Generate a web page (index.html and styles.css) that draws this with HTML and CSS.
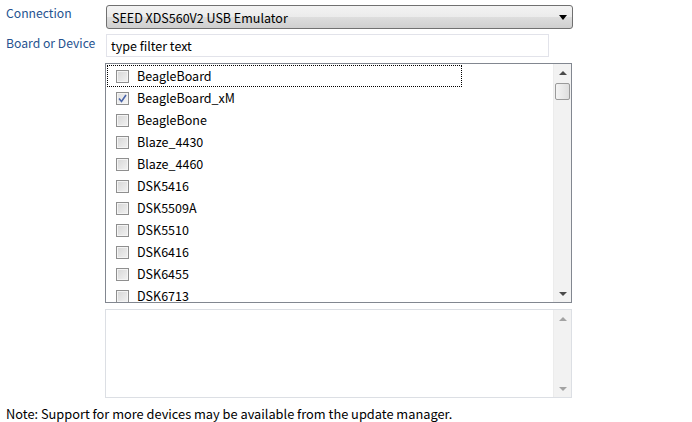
FILE: index.html
```html
<!DOCTYPE html>
<html lang="en">
<head>
    <meta charset="utf-8">
    <title>Board or Device</title>
<link rel="stylesheet" href="styles.css">
</head>
<body>
    <div id="page">
        <div class="row">
            <div class="label lblConn">Connection</div>
            <div class="combo">
                <span>SEED XDS560V2 USB Emulator</span>
                <span class="arrow"></span>
            </div>
        </div>
        <div class="row">
            <div class="label lblBoard">Board or Device</div>
            <div class="filter">type filter text</div>
        </div>
        <div class="row">
            <div class="label"></div>
            <div class="list">
                <div class="items">
                    <div class="item focus"><span class="chk"></span>BeagleBoard</div>
                    <div class="item"><span class="chk on"><svg width="9" height="9" viewBox="0 0 9 9"><path d="M1 4.5 L3.5 7.5 L8 1" fill="none" stroke="#4a64a8" stroke-width="1.6"/></svg></span>BeagleBoard_xM</div>
                    <div class="item"><span class="chk"></span>BeagleBone</div>
                    <div class="item"><span class="chk"></span>Blaze_4430</div>
                    <div class="item"><span class="chk"></span>Blaze_4460</div>
                    <div class="item"><span class="chk"></span>DSK5416</div>
                    <div class="item"><span class="chk"></span>DSK5509A</div>
                    <div class="item"><span class="chk"></span>DSK5510</div>
                    <div class="item"><span class="chk"></span>DSK6416</div>
                    <div class="item"><span class="chk"></span>DSK6455</div>
                    <div class="item"><span class="chk"></span>DSK6713</div>
                </div>
                <div class="sbar">
                    <span class="up"></span>
                    <span class="thumb"></span>
                    <span class="grow"></span>
                    <span class="down"></span>
                </div>
            </div>
        </div>
        <div class="row">
            <div class="label"></div>
            <div class="desc">
                <div class="items"></div>
                <div class="sbar off">
                    <span class="up"></span>
                    <span class="grow"></span>
                    <span class="down"></span>
                </div>
            </div>
        </div>
        <div class="note">Note: Support for more devices may be available from the update manager.</div>
    </div>
</body>
</html>
```
FILE: styles.css
```css
body{
    margin: 0;
    background: #fff;
    font-family: "Noto Sans CJK SC", "Noto Sans", sans-serif;
    font-size: 12.5px;
    color: #000;
}
#page{
    padding: 5px 0 0 6px;
}
.row{
    display: flex;
    margin-bottom: 6px;
}
.label{
    width: 99px;
    flex: none;
    color: #26528f;
}
.lblConn{ margin-top: -1px; font-size: 12.2px; }
.lblBoard{ margin-top: -1px; font-size: 12.2px; }

.combo{
    width: 453px;
    height: 22px;
    border: 1px solid #707070;
    border-radius: 3px;
    background: linear-gradient(#f3f3f3, #ebebeb 50%, #dddddd 51%, #cfcfcf);
    display: flex;
    align-items: center;
    justify-content: space-between;
    padding: 0 6px 0 6px;
    box-sizing: content-box;
    margin-left: 1px;
}
.combo .arrow{
    width: 0;
    height: 0;
    border-left: 4px solid transparent;
    border-right: 4px solid transparent;
    border-top: 5px solid #000;
    margin-right: -1px;
}
.combo span:first-child{ margin-left: -1px; }

.filter{
    width: 437px;
    height: 21px;
    border: 1px solid #e2e3ea;
    margin-left: 1px;
    padding-left: 4px;
    line-height: 21px;
    margin-top: -1px;
}

.list, .desc{
    width: 465px;
    display: flex;
    border: 1px solid #828790;
}
.list{ height: 238px; }
.desc{
    height: 87px;
    border-color: #dcdfe4;
}
.items{
    flex: 1;
    padding-top: 1px;
    overflow: hidden;
}
.item{
    height: 22px;
    display: flex;
    align-items: center;
    padding-left: 8px;
    margin-left: 1px;
    width: 355px;
    box-sizing: border-box;
    border: 1px solid transparent;
    line-height: 18px;
}
.item.focus{
    border: 1px dotted #000;
}
.chk{
    width: 11px;
    height: 11px;
    flex: none;
    border: 1px solid #8f8f8f;
    background: linear-gradient(135deg, #d6d6d6, #f2f2f2);
    box-shadow: inset 0 0 0 1px #f4f4f4;
    margin-right: 8px;
    display: flex;
    align-items: center;
    justify-content: center;
}
.chk.on{
    background: linear-gradient(135deg, #e0e0e0, #f7f7f7);
}

.sbar{
    width: 17px;
    display: flex;
    flex-direction: column;
    align-items: center;
    background: #f2f2f2;
    border-left: 1px solid #ececec;
}
.sbar .up, .sbar .down{
    height: 17px;
    width: 17px;
    display: flex;
    align-items: center;
    justify-content: center;
}
.sbar .up::after{
    content: "";
    border-left: 4px solid transparent;
    border-right: 4px solid transparent;
    border-bottom: 4px solid #4a4a4a;
}
.sbar .down::after{
    content: "";
    border-left: 4px solid transparent;
    border-right: 4px solid transparent;
    border-top: 4px solid #4a4a4a;
}
.sbar.off .up::after{ border-bottom-color: #a3a3a3; }
.sbar.off .down::after{ border-top-color: #a3a3a3; }
.sbar .thumb{
    width: 13px;
    height: 15px;
    border: 1px solid #9a9a9a;
    border-radius: 2px;
    background: linear-gradient(90deg, #f4f4f4, #dedede);
    margin-top: 2px;
}
.sbar .grow{ flex: 1; }

.note{
    margin-top: 0px;
    font-size: 12.8px;
}
```
